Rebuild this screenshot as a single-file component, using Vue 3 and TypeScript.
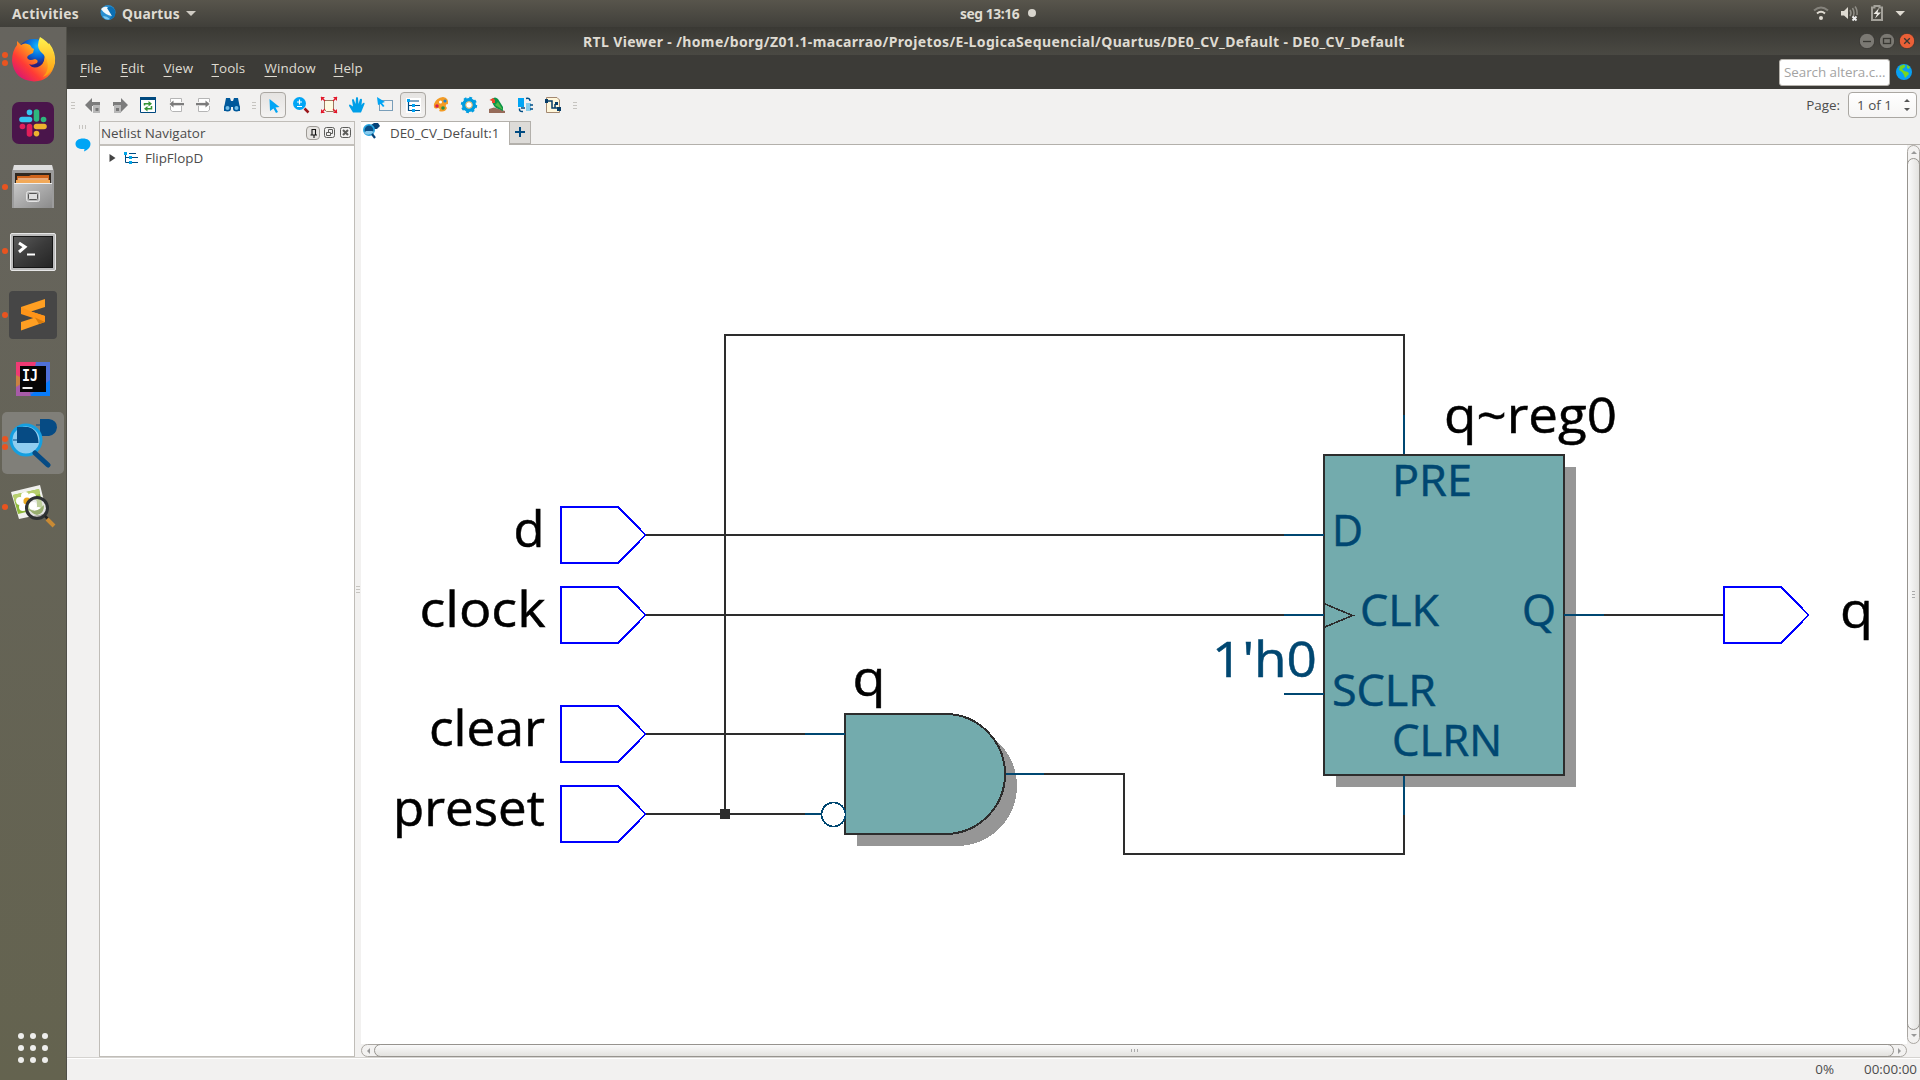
<script setup lang="ts">
interface Port { name: string; y: number; x: number; w: number; tx: number }
interface Label { text: string; x: number; y: number; w: number; size: number; pin: boolean }

const inputs: Port[] = [
  { name: 'd', y: 535, x: 561, w: 31, tx: 513.5 },
  { name: 'clock', y: 615, x: 561, w: 126, tx: 419.5 },
  { name: 'clear', y: 734, x: 561, w: 116, tx: 429 },
  { name: 'preset', y: 814, x: 561, w: 152, tx: 393 },
]

const labels: Label[] = [
  { text: 'q', x: 852.5, y: 696, w: 33, size: 49.5, pin: false },
  { text: 'q~reg0', x: 1444, y: 433, w: 173, size: 49.5, pin: false },
  { text: 'q', x: 1840, y: 628, w: 33, size: 49.5, pin: false },
  { text: "1'h0", x: 1212, y: 677, w: 105, size: 49.5, pin: true },
  { text: 'PRE', x: 1392, y: 496, w: 80, size: 43, pin: true },
  { text: 'D', x: 1332, y: 546, w: 31, size: 43, pin: true },
  { text: 'CLK', x: 1360, y: 626, w: 79, size: 43, pin: true },
  { text: 'Q', x: 1522, y: 626, w: 34, size: 43, pin: true },
  { text: 'SCLR', x: 1332, y: 706, w: 104, size: 43, pin: true },
  { text: 'CLRN', x: 1392, y: 756, w: 110, size: 43, pin: true },
]

const menus = ['File', 'Edit', 'View', 'Tools', 'Window', 'Help']
const gridDots = [0, 1, 2, 3, 4, 5, 6, 7, 8]

function portPath(x: number, y: number): string {
  return `M${x} ${y - 28}H${x + 57}L${x + 84.5} ${y}L${x + 57} ${y + 28}H${x}Z`
}
</script>

<template>
  <div class="desktop">
    <header class="topbar">
      <span class="activities">Activities</span>
      <svg class="app-ico" width="16" height="16" viewBox="0 0 16 16">
        <circle cx="8" cy="7.5" r="7.5" fill="#2a8fd0" />
        <path d="M1 4Q5 0 9 3L12 11Q5 10 1 4Z" fill="#f2f8fc" />
        <path d="M7 3Q11-1 15 5V11Q12 15 9 14L12 11Z" fill="#0b6fb4" />
        <path d="M3 11Q7 11 10 14Q5 16 3 11Z" fill="#7cc8f0" />
      </svg>
      <span class="appname">Quartus</span>
      <i class="caret"></i>
      <span class="clock">seg 13:16</span>
      <i class="bullet"></i>
      <span class="grow"></span>
      <svg class="sys" width="100" height="27" viewBox="0 0 100 27" fill="none">
        <path d="M4 10.5Q11 4.500 18 10.500" stroke="#85837c" stroke-width="2" />
        <path d="M7 13.500Q11 10 15 13.500" stroke="#dfdbd2" stroke-width="2" />
        <circle cx="11" cy="18" r="2" fill="#dfdbd2" />
        <path d="M31 11H34L38 7V19L34 15.500H31Z" fill="#dfdbd2" />
        <path d="M40 10Q42 13 40 16M42.500 8Q45.500 13 42.500 18M45 6.500Q47.500 9.500 47 15" stroke="#8f8d86" stroke-width="1.500" />
        <path d="M42.500 16.500L46.500 20.500M46.500 16.500L42.500 20.500" stroke="#eee" stroke-width="1.800" />
        <path d="M62 7.500H64.500V6H69.500V7.500H72V20H62Z" stroke="#a3a19a" stroke-width="2" />
        <path d="M69 8L63.500 14H67L65 18.500L71 12.500H67.500Z" fill="#eceae4" />
        <path d="M85.500 11H95L90.200 16Z" fill="#dfdbd2" />
      </svg>
    </header>

    <div class="main">
      <aside class="dock">
        <div class="launcher">
          <b class="run two"></b>
          <svg class="fox" width="48" height="48" viewBox="0 0 48 48">
            <defs>
              <linearGradient id="fx" x1="0.9" y1="0.1" x2="0.1" y2="0.9">
                <stop offset="0" stop-color="#fff04a" /><stop offset=".35" stop-color="#ffa01c" />
                <stop offset=".68" stop-color="#ff3b35" /><stop offset="1" stop-color="#d6127a" />
              </linearGradient>
              <radialGradient id="fb" cx=".6" cy=".2"><stop offset="0" stop-color="#12b8ff" /><stop offset=".6" stop-color="#0566d8" /><stop offset="1" stop-color="#29207c" /></radialGradient>
              <linearGradient id="fy" x1="0" y1="0" x2="0" y2="1"><stop offset="0" stop-color="#fff44f" /><stop offset="1" stop-color="#ff980e" /></linearGradient>
            </defs>
            <circle cx="24" cy="22" r="18" fill="url(#fb)" />
            <path d="M7 6L11 10Q15 7 20 10L22 13L24 14L23 18L19 20Q16 22 18 24Q20 26 25 24Q29 25 27 28Q22 31 19 29Q23 35 30 31Q36 27 34 17L39 8Q46 17 45 28Q41 46 24 46.500Q4 45 2 26Q2 16 7 10Z" fill="url(#fx)" />
            <path d="M30 2Q44 10 45 26Q43 38 33 42Q40 35 37 25Q35 20 30 16Q26 11 30 2Z" fill="url(#fy)" />
          </svg>
        </div>
        <div class="launcher">
          <svg width="42" height="42" viewBox="0 0 42 42">
            <rect width="42" height="42" rx="7" fill="#4a154b" />
            <g stroke-width="5.600" stroke-linecap="round">
              <path d="M10 17.500H17.500M17.500 10.500V10.200" stroke="#36c5f0" />
              <path d="M24.500 10V17M31.500 17.500H31.600" stroke="#2eb67d" />
              <path d="M24.500 24.500H32M24.500 31.500V31.600" stroke="#ecb22e" />
              <path d="M17.500 24.500V32M10.500 24.500H10.400" stroke="#e01e5a" />
            </g>
          </svg>
        </div>
        <div class="launcher">
          <b class="run"></b>
          <svg width="42" height="44" viewBox="0 0 42 44">
            <defs><linearGradient id="fg" x1="0" y1="0" x2="1" y2="1"><stop offset="0" stop-color="#c8c8c8" /><stop offset="1" stop-color="#8b8b8b" /></linearGradient></defs>
            <path d="M2 0H40L42 6V43H0V6Z" fill="#9c9c9c" /><path d="M2 0H40L41 5H1Z" fill="#dedede" />
            <rect x="3" y="8" width="36" height="12" fill="#302820" />
            <path d="M5 11H17L19 10H37V18H5Z" fill="#d0641c" /><path d="M4 15H38V18H4Z" fill="#f2a958" /><path d="M6 13.500H36V14.500H6Z" fill="#fff0d8" />
            <path d="M2 18H40V43H2Z" fill="url(#fg)" /><path d="M2 18H40V19H2Z" fill="#eee" />
            <rect x="14.500" y="26.500" width="13" height="10" rx="2" fill="#b8b8b8" stroke="#e4e4e4" />
            <rect x="16.500" y="28.500" width="9" height="6" rx="1" fill="#dedede" stroke="#555" />
          </svg>
        </div>
        <div class="launcher">
          <b class="run"></b>
          <svg class="term" width="46" height="38" viewBox="0 0 46 38">
            <defs><linearGradient id="tg" x1="0" y1="0" x2="1" y2="1"><stop offset="0" stop-color="#5a5a5a" /><stop offset=".5" stop-color="#3b3b3b" /><stop offset="1" stop-color="#242424" /></linearGradient></defs>
            <rect x=".5" y=".5" width="45" height="37" rx="1.500" fill="#bbb" stroke="#e6e6e6" />
            <rect x="3.500" y="3.500" width="39" height="31" fill="url(#tg)" stroke="#161616" />
            <path d="M9 10L15 14L9 19" stroke="#fff" stroke-width="3" fill="none" /><path d="M17 21.500H25" stroke="#fff" stroke-width="2" />
          </svg>
        </div>
        <div class="launcher">
          <b class="run"></b>
          <svg width="48" height="48" viewBox="0 0 48 48">
            <rect width="48" height="48" rx="4" fill="#464646" />
            <path d="M12 16L36 8V16L22 20.500L36 25V31L12 39.500V31L26 26.500L12 22Z" fill="#ff9f22" />
            <path d="M22 20.500L36 25V31L12 23V16Z" fill="#ff9418" />
            <path d="M26 26.500L36 31L30 33Z" fill="#d87b0c" />
          </svg>
        </div>
        <div class="launcher">
          <svg width="34" height="34" viewBox="0 0 34 34">
            <rect width="34" height="34" fill="#ef3a74" /><path d="M20 0H34V34H13Z" fill="#4f70d8" /><path d="M13 34L34 18V34Z" fill="#087cfa" />
            <path d="M0 13L6 16V34H0Z" fill="#c98242" /><path d="M0 25L8 20L15 34H0Z" fill="#a75ba8" />
            <rect x="4" y="4" width="26" height="26" fill="#050505" />
            <text x="6" y="19" textLength="16" lengthAdjust="spacingAndGlyphs" class="ij">IJ</text>
            <rect x="6.500" y="25" width="10" height="2" fill="#eee" />
          </svg>
        </div>
        <div class="launcher active">
          <b class="run two"></b>
          <svg width="48" height="50" viewBox="0 0 48 50">
            <path d="M27 6.500H31V1H40Q48 2 48 9.500Q47 17 40 18H31V7.500H27Z" fill="#064b84" />
            <circle cx="17" cy="22" r="15" fill="#90cdf0" stroke="#159fe0" stroke-width="3" />
            <path d="M4 21.500H8V9H19Q29 11 29.500 25H8V22.500H4Z" fill="#064b84" />
            <path d="M26 35L39 47" stroke="#064b84" stroke-width="5" stroke-linecap="round" />
          </svg>
        </div>
        <div class="launcher">
          <b class="run"></b>
          <svg width="48" height="48" viewBox="0 0 48 48">
            <path d="M2 9L31 2L38 30L10 36Z" fill="#f1f1ee" /><path d="M4 12L30 6L34 25L9 31Z" fill="#8fb83b" /><path d="M4 12L30 6L31 11L6 19Z" fill="#b7cf6d" />
            <g fill="#fff"><circle cx="16" cy="13" r="4" /><circle cx="23" cy="14" r="4" /><circle cx="11" cy="18" r="4" /><circle cx="14" cy="24" r="4" /><circle cx="24" cy="20" r="4" /></g><circle cx="18" cy="18" r="3.500" fill="#eaa61d" />
            <circle cx="28" cy="25" r="10.500" fill="#ddd" fill-opacity=".6" stroke="#2e3133" stroke-width="3" />
            <circle cx="24" cy="23" r="4" fill="#fff" /><circle cx="29" cy="28" r="4" fill="#fff" />
            <path d="M20 26Q27 31 35 22Q35 31 28 32Q23 31 20 26Z" fill="#98ae70" />
            <path d="M36 33L39 36" stroke="#222" stroke-width="2.500" /><path d="M38 36L45 43" stroke="#c98a34" stroke-width="4" />
          </svg>
        </div>
        <div class="apps"><i v-for="n in gridDots" :key="n"></i></div>
      </aside>

      <section class="window">
        <div class="titlebar">
          <span class="title">RTL Viewer - /home/borg/Z01.1-macarrao/Projetos/E-LogicaSequencial/Quartus/DE0_CV_Default - DE0_CV_Default</span>
          <div class="winbtns">
            <svg v-for="k in 3" :key="k" width="16" height="16" viewBox="0 0 16 16" :class="{ close: k === 3 }">
              <circle class="disc" cx="8" cy="8" r="7.700" />
              <path v-if="k === 1" d="M4 8.500H12" />
              <rect v-else-if="k === 2" x="4.500" y="5.500" width="7" height="5" />
              <path v-else d="M5.200 5.200L10.800 10.800M10.800 5.200L5.200 10.800" />
            </svg>
          </div>
        </div>

        <nav class="menubar">
          <span v-for="m in menus" :key="m" :class="'m-' + m.toLowerCase()"><u>{{ m[0] }}</u>{{ m.slice(1) }}</span>
          <div class="search">Search altera.c...</div>
          <svg class="globe" width="16" height="16" viewBox="0 0 16 16">
            <circle cx="8" cy="8" r="8" fill="#08a0f4" />
            <path d="M4 2L8 0.500L9.500 2L8 4L6 5L8 7L12 8L13 10L9 14L8 11L6 8L3 6Z" fill="#78d51e" /><path d="M11 1L14 3L13 5L11 4Z" fill="#78d51e" />
          </svg>
        </nav>

        <div class="toolbar">
          <div class="grip g1"><i></i><i></i><i></i></div>
          <div class="tool"><svg class="nudge" viewBox="0 0 24 24"><path d="M4 12L11 5V9H19V13H11V19Z" fill="#7c7c7c" /><rect x="12" y="12" width="7" height="8" fill="#b8b8b8" /><rect x="14.500" y="15" width="3" height="3" fill="#777" /></svg></div>
          <div class="tool"><svg viewBox="0 0 24 24"><path d="M20 12L13 5V9H5V13H13V19Z" fill="#7c7c7c" /><rect x="6" y="12" width="7" height="8" fill="#b8b8b8" /><rect x="8" y="15" width="3" height="3" fill="#777" /></svg></div>
          <div class="tool"><svg viewBox="0 0 24 24"><path d="M4.500 4.500H19.500V19.500H4.500Z" fill="#fff" stroke="#00497f" /><path d="M4 4H20V7H4Z" fill="#00497f" /><path d="M8.500 12.500V10.700H13M15.500 13V15.800H11" fill="none" stroke="#359536" stroke-width="1.500" /><path d="M12.500 8L16 10.700L12.500 13.400ZM11.500 13L8 15.800L11.500 18.500Z" fill="#359536" /></svg></div>
          <div class="tool"><svg viewBox="0 0 24 24"><path d="M6.500 9V5.500H17.500V9M6.500 13V17L8.500 18.500H17.500V13" fill="#fff" stroke="#b5b5b5" /><path d="M5.500 11L9.500 7.500V10H20V12.200H9.500V14.500Z" fill="#7c7c7c" /></svg></div>
          <div class="tool"><svg viewBox="0 0 24 24"><path d="M6.500 9V5.500H17.500V9M6.500 13V18.500H15.500L17.500 17V13" fill="#fff" stroke="#b5b5b5" /><path d="M17.500 11L13.500 7.500V10H4V12.200H13.500V14.500Z" fill="#7c7c7c" /></svg></div>
          <div class="tool"><svg viewBox="0 0 24 24"><path d="M6 5H10L11 8H13L14 5H18L20 15V18H14L13 14H11L10 18H4V15Z" fill="#00599b" /><circle cx="7.500" cy="15" r="3.500" fill="#00599b" /><circle cx="16.500" cy="15" r="3.500" fill="#00599b" /><circle cx="7.500" cy="15" r="2" fill="#75bfe8" /><circle cx="16.500" cy="15" r="2" fill="#75bfe8" /></svg></div>
          <div class="grip g2"><i></i><i></i><i></i></div>
          <div class="tool on"><svg viewBox="0 0 24 24"><path d="M8.500 6L18.500 14L14.500 14.500L17 19L15 20L12.500 15.500L9 18Z" fill="#00a5f5" /></svg></div>
          <div class="tool"><svg viewBox="0 0 24 24"><circle cx="10.500" cy="10.500" r="6.500" fill="#00a5f5" /><path d="M15.500 15.500L19.500 19.500" stroke="#9b171b" stroke-width="2.500" /><path d="M8 9H13M10.500 6.500V11.500M8 13.500H13" stroke="#fff" stroke-width="1.200" /></svg></div>
          <div class="tool"><svg viewBox="0 0 24 24"><path d="M7.500 7.500H16.500V18.500H9.500L7.500 16.500Z" fill="#fffbe2" stroke="#9a7a63" /><path d="M4 4L8 8M20 4L16 8M4 20L8 16M20 20L16 16" stroke="#e2182b" stroke-width="1.200" fill="none" /><path d="M4 4H8L4 8ZM20 4V8L16 4ZM4 20V16L8 20ZM20 20H16L20 16Z" fill="#e2182b" /></svg></div>
          <div class="tool"><svg viewBox="0 0 24 24"><path d="M8 19.500L5 14.500Q3 11.500 5 11.500L8 13.500L7 7Q8 5 9 7L10.500 11L11 5Q12 3 13 5L13.500 11L15 6Q17 5 17 7L16.500 12L18 10Q20 9 19.500 11L16 19.500Z" fill="#009fe8" /></svg></div>
          <div class="tool"><svg viewBox="0 0 24 24"><rect x="6.500" y="7.500" width="13" height="10" fill="none" stroke="#004b82" stroke-dasharray="1 1" /><path d="M4 4L12 9L9 10L11.500 13L10 14L7.500 11L5 12Z" fill="#00a5f5" /></svg></div>
          <div class="tool on"><svg viewBox="0 0 24 24"><rect x="5" y="5" width="15" height="15" fill="#fff" /><path d="M7.500 7V17.500H19M7.500 12.500H19M7.500 8H18" stroke="#004b82" fill="none" stroke-width="1.200" /><path d="M6 6H9V9H6ZM11 11H14V14H11ZM11 16H14V19H11Z" fill="#00a5f5" /></svg></div>
          <div class="tool"><svg viewBox="0 0 24 24"><path d="M5 11Q7 5 14 4Q20 5 19 11L17 11.500Q16 13 18 15Q16 20 10 18Q12 16 9 15Q4 17 5 11Z" fill="#f49b24" /><circle cx="8" cy="13" r="1.800" fill="#d8204f" /><circle cx="11.500" cy="9" r="1.500" fill="#fff" /><circle cx="16" cy="8" r="1.600" fill="#1b83d3" /><circle cx="14" cy="15" r="1.800" fill="#2b9146" /></svg></div>
          <div class="tool"><svg viewBox="0 0 24 24"><circle cx="12" cy="12" r="5.200" fill="#fff" stroke="#009de0" stroke-width="3.600" /><circle cx="12" cy="12" r="7.200" fill="none" stroke="#009de0" stroke-width="2" stroke-dasharray="2.830 2.830" /><circle cx="12" cy="12" r="3.300" fill="none" stroke="#d6ac5d" /></svg></div>
          <div class="tool"><svg viewBox="0 0 24 24"><path d="M4 16L9 14.500L20 18V20H4Z" fill="#966b59" /><path d="M7 6Q10 3 13 6L18 14L18 18L11 15Q7 12 7 6Z" fill="#0b9448" /><path d="M4.500 7L8 5L10 7V10H7V8Z" fill="#ed482e" /><path d="M13 9L18 17L10 12Z" fill="#54b947" /></svg></div>
          <div class="tool"><svg viewBox="0 0 24 24"><rect x="5" y="5" width="6" height="9" fill="#00a5f5" /><rect x="13" y="10" width="5" height="8" fill="#86cceb" /><path d="M13 5.500Q17 4.500 17 8M10 18.500Q6 19 6.500 15.500M12 15H8M17 12H20M17 16H20" stroke="#004b82" fill="none" stroke-width="1.500" /></svg></div>
          <div class="tool"><svg viewBox="0 0 24 24"><path d="M5.500 4.500H16L18.500 7V19.500H5.500Z" fill="#fff6da" stroke="#a38870" /><path d="M5 8H11V15H19M14 11V15" stroke="#073d67" stroke-width="1.500" fill="none" /><path d="M14 9H17V12H14ZM16 14H20V18H16ZM4 6H7V10H4Z" fill="#073d67" /></svg></div>
          <div class="grip g3"><i></i><i></i><i></i></div>
          <span class="grow"></span>
          <span class="pagelabel">Page:</span>
          <div class="spin"><span>1 of 1</span><svg width="8" height="14" viewBox="0 0 8 14"><path d="M1 4L4 1L7 4ZM1 10L4 13L7 10Z" fill="#555" /></svg></div>
        </div>

        <div class="work">
          <div class="strip">
            <div class="vgrip"><i></i><i></i><i></i></div>
            <svg width="16" height="14" viewBox="0 0 16 14"><path d="M8 .5C12.500 .5 15.500 2.600 15.500 6Q15.500 11 9 13.500L9.500 11C4 11.500 .5 9.500 .5 6C.5 2.600 3.500 .5 8 .5Z" fill="#00a5f5" /></svg>
          </div>
          <div class="panel">
            <div class="panelhead">
              <span>Netlist Navigator</span>
              <svg width="46" height="14" viewBox="0 0 46 14" fill="none" stroke="#5c5c5a">
                <rect x=".5" y=".5" width="13" height="13" rx="3.500" fill="#e6e4e1" stroke="#9d9a95" /><path d="M6 9V3.500H9.500V9M4.500 9H11M8 9V12" stroke="#111" stroke-width="1.100" />
                <rect x="18.500" y="1.500" width="10" height="10" rx="2" /><path d="M22.500 6V3.500H26.500V7.500H24.500M20.500 6.500H24.500V9.500H20.500Z" />
                <rect x="34.500" y="1.500" width="10" height="10" rx="2" /><path d="M37 4L42 9M42 4L37 9" stroke-width="2" />
              </svg>
            </div>
            <div class="tree">
              <svg width="7" height="8" viewBox="0 0 7 8"><path d="M.5 0L6.500 4L.5 8Z" fill="#444" /></svg>
              <svg class="treeico" width="14" height="12" viewBox="0 0 14 12"><path d="M1.500 1V10.500H14M1.500 5.500H14M5 1.500H12" stroke="#004b82" fill="none" /><path d="M0 0H3V3H0ZM5 4H8V7H5ZM5 9H8V12H5Z" fill="#00a5e8" /></svg>
              <span>FlipFlopD</span>
            </div>
          </div>
          <div class="splitter"><i></i><i></i><i></i></div>
          <div class="viewer">
            <div class="tabs">
              <div class="tab">
                <svg width="18" height="17" viewBox="0 0 18 17"><path d="M8 2L11 0H15L17 3L14 6H9Z" fill="#064378" /><circle cx="6" cy="7" r="5.200" fill="#0b4f86" stroke="#29a7e1" stroke-width="1.600" /><path d="M1 10Q6 14 11 9L9 8H3Z" fill="#86caee" /><path d="M9 11L12 15" stroke="#064378" stroke-width="2.200" /></svg>
                <span>DE0_CV_Default:1</span>
              </div>
              <div class="plus"><svg width="10" height="10" viewBox="0 0 10 10"><path d="M5 0V10M0 5H10" stroke="#004b82" stroke-width="2" /></svg></div>
            </div>
            <div class="scrollarea">
              <div class="canvascol">
                <svg class="schematic" viewBox="361 145 1546 899">
                  <g shape-rendering="crispEdges" fill="none" stroke-width="2">
                    <rect x="1336" y="467" width="240" height="320" fill="#969696" />
                    <path d="M857 726H957A60 60 0 0 1 957 846H857Z" fill="#969696" />
                    <g stroke="#2d2d2d">
                      <path d="M646 535H1284M646 615H1284M646 734H805M646 814H805M725 814V335H1404V415M1044 774H1124V854H1404V815M1604 615H1724" />
                      <rect x="1324" y="455" width="240" height="320" fill="#73abad" />
                      <path d="M845 714H945A60 60 0 0 1 945 834H845Z" fill="#73abad" />
                      <path d="M1325 604L1352.500 615.500L1325 627" stroke-width="1.600" />
                    </g>
                    <rect x="720" y="809" width="10" height="10" fill="#2d2d2d" />
                    <g stroke="#004771">
                      <path d="M1284 535H1324M1284 615H1324M1284 694H1324M1404 415V454M1404 776V815M1564 615H1604M805 734H845M805 814H821M1006 774H1044" />
                      <circle cx="833.500" cy="814.500" r="12" stroke-width="1.700" fill="#fff" />
                    </g>
                    <g stroke="#0000ff">
                      <path v-for="p in inputs" :key="p.name" :d="portPath(p.x, p.y)" />
                      <path :d="portPath(1724, 615)" />
                    </g>
                  </g>
                  <text v-for="p in inputs" :key="p.name" :x="p.tx" :y="p.y + 12" :textLength="p.w" font-size="49.5" lengthAdjust="spacingAndGlyphs">{{ p.name }}</text>
                  <text v-for="(l, i) in labels" :key="i" :x="l.x" :y="l.y" :textLength="l.w" :font-size="l.size" :class="{ pin: l.pin }" lengthAdjust="spacingAndGlyphs">{{ l.text }}</text>
                </svg>
                <div class="hscroll">
                  <svg width="12" height="10" viewBox="0 0 12 10"><path d="M8 2V8L5 5Z" fill="#999" /></svg>
                  <div class="hthumb"><i></i><i></i><i></i></div>
                  <svg width="12" height="10" viewBox="0 0 12 10"><path d="M4 2V8L7 5Z" fill="#999" /></svg>
                </div>
              </div>
              <div class="vcol">
                <div class="vscroll">
                  <svg width="10" height="12" viewBox="0 0 10 12"><path d="M2 8H8L5 5Z" fill="#999" /></svg>
                  <div class="vthumb"><i></i><i></i><i></i></div>
                  <svg width="10" height="13" viewBox="0 0 10 13"><path d="M2 4H8L5 7Z" fill="#999" /></svg>
                </div>
              </div>
            </div>
          </div>
        </div>
        <footer class="status"><span class="pct">0%</span><span class="time">00:00:00</span></footer>
      </section>
    </div>
  </div>
</template>

<style>
html, body { margin: 0; overflow: hidden; }
</style>

<style scoped>
* { box-sizing: border-box; }
.desktop { width: 1920px; height: 1080px; display: flex; flex-direction: column; font-family: "Open Sans", "Noto Sans", sans-serif; font-size: 13.4px; color: #4c4c4c; background: #f2f1f0; white-space: nowrap; overflow: hidden; }
.grow { flex: 1; }
.topbar { height: 27px; flex: none; display: flex; align-items: center; background: linear-gradient(#58554c, #403f3a); color: #dfdbd2; font-weight: 700; font-family: "Noto Sans", sans-serif; font-size: 13.8px; }
.topbar > span { padding-bottom: 1px; }
.activities { width: 68px; margin-left: 12px; letter-spacing: .3px; }
.app-ico { margin-left: 20px; margin-top: -2px; }
.appname { margin-left: 6px; width: 60px; letter-spacing: .25px; }
.caret { margin-left: 4px; border: 5px solid transparent; border-top-color: #cfcbc3; border-bottom: 0; }
.clock { margin-left: 764px; width: 62px; letter-spacing: -.4px; }
.bullet { width: 8px; height: 8px; border-radius: 50%; background: #d8d5cd; margin: 0 0 1px 6px; }
.sys { margin-right: 10px; }
.main { flex: 1; display: flex; min-height: 0; }
.dock { width: 67px; flex: none; display: flex; flex-direction: column; background: linear-gradient(#66645e, #64634f); border-right: 1px solid #504f48; }
.launcher { height: 64px; flex: none; display: flex; align-items: center; justify-content: center; position: relative; }
.launcher.active { height: 62px; width: 62px; margin: 1px 2px; background: #807f79; border-radius: 5px; }
.fox { margin-left: 2px; }
.term { margin-top: 2px; }
.run { position: absolute; left: 2px; top: 29px; width: 6px; height: 6px; border-radius: 50%; background: #e95420; }
.run.two { top: 25px; box-shadow: 0 8px #e95420; }
.active .run { left: 0; top: 24px; }
.ij { font: 700 15px "DejaVu Sans Mono", monospace; fill: #fff; }
.apps { margin-top: auto; margin-bottom: 17px; margin-left: 18px; display: grid; grid-template-columns: repeat(3, 6px); gap: 6px; }
.apps i { height: 6px; border-radius: 50%; background: #eeeeec; }
.window { flex: 1; display: flex; flex-direction: column; min-width: 0; }
.titlebar { height: 28px; flex: none; display: flex; align-items: center; background: linear-gradient(#3a3934, #4a4943); color: #dfdbd2; font: 700 14px "Noto Sans", sans-serif; }
.title { margin-left: 516px; width: 830px; letter-spacing: .36px; }
.winbtns { display: flex; gap: 4px; margin-left: auto; margin-right: 5px; }
.winbtns svg { fill: none; stroke: #393833; stroke-width: 1.300; }
.winbtns .disc { fill: #7b7973; stroke: #33322e; stroke-width: .8; }
.winbtns .close .disc { fill: #ec6037; }
.menubar { height: 34px; flex: none; background: #3c3b37; color: #dfdbd2; display: flex; align-items: center; padding-left: 13px; }
.menubar > span { margin-top: -8px; letter-spacing: .1px; }
.menubar u { text-underline-offset: 3px; text-decoration-thickness: 1px; }
.m-file { width: 40.5px; }
.m-edit { width: 43px; }
.m-view { width: 48px; }
.m-tools { width: 53px; }
.m-window { width: 69px; }
.search { margin-left: auto; width: 111px; height: 27px; margin-top: 1px; border: 1px solid #b5b2ac; border-radius: 3px; background: #fff; color: #a3a3a3; padding-left: 4px; line-height: 24px; letter-spacing: -.05px; }
.globe { margin: 0 8px 0 6px; }
.toolbar { height: 32px; flex: none; display: flex; padding-right: 3px; }
.tool { width: 28px; height: 32px; display: flex; align-items: center; justify-content: center; }
.tool svg { width: 24px; height: 24px; }
.tool .nudge { margin-left: 1px; }
.tool.on { width: 26px; height: 26px; margin: 3px 1px; border: 1px solid #aaa7a2; border-radius: 4px; background: linear-gradient(#e5e3e1, #f4f3f2); }
.tool.on svg { flex: none; }
.grip { display: flex; flex-direction: column; gap: 2px; justify-content: center; }
.grip i, .splitter i { display: block; width: 4px; height: 1px; background: #c6c4c0; }
.g1 { width: 11px; padding-left: 4px; }
.g2 { width: 13px; padding-left: 6px; }
.g3 { width: 14px; padding-left: 6px; }
.pagelabel { line-height: 32px; margin-right: 8px; }
.spin { width: 69px; height: 26px; margin-top: 3px; border: 1px solid #aaa7a2; border-radius: 4px; background: linear-gradient(#fff, #f6f5f4); display: flex; align-items: center; justify-content: space-between; padding: 0 5px 0 8px; }
.work { height: 937px; flex: none; display: flex; }
.strip { width: 32px; flex: none; padding: 4px 0 0 8px; }
.vgrip { display: flex; gap: 2px; margin: 0 0 9px 4px; }
.vgrip i { width: 1px; height: 4px; background: #c6c4c0; }
.strip svg { display: block; }
.panel { width: 256px; flex: none; border: 1px solid #c0bdb8; background: #fff; height: 936px; }
.panelhead { height: 24px; border-bottom: 2px solid #c3c0bb; background: #f2f1f0; display: flex; align-items: center; justify-content: space-between; padding: 0 2px 0 1px; }
.tree { display: flex; align-items: center; height: 23px; padding-left: 9px; }
.treeico { margin-left: 8px; margin-right: 7px; }
.splitter { width: 6px; flex: none; display: flex; flex-direction: column; gap: 2px; justify-content: center; padding-left: 1px; }
.viewer { flex: 1; display: flex; flex-direction: column; min-width: 0; }
.tabs { height: 24px; flex: none; display: flex; border-bottom: 1px solid #b3b0ab; }
.tab { width: 149px; border: 1px solid #b3b0ab; border-bottom: 0; border-left: 0; height: 24px; background: #fff; display: flex; align-items: center; padding: 0 0 2px 2px; }
.tab svg { margin-top: -2px; }
.tab span { margin-left: 9px; letter-spacing: -.02px; }
.plus { width: 21px; height: 23px; border: 1px solid #b3b0ab; border-left: 0; background: #dddbd8; display: flex; align-items: center; justify-content: center; padding-bottom: 2px; }
.scrollarea { flex: 1; display: flex; min-height: 0; }
.canvascol { width: 1546px; display: flex; flex-direction: column; }
.schematic { width: 1546px; height: 899px; background: #fff; flex: none; display: block; }
.schematic text { fill: #000; font-family: "Open Sans", sans-serif; stroke: #000; stroke-width: .5px; }
.schematic text.pin { fill: #004771; stroke: #004771; }
.hscroll { height: 13px; border: 1px solid #aaa7a2; border-radius: 7px; display: flex; align-items: center; background: #f3f2f1; }
.hthumb { flex: 1; height: 13px; margin: 0; border: 1px solid #96938e; border-radius: 7px; background: linear-gradient(#fafafa, #e3e2df); display: flex; gap: 2px; align-items: center; justify-content: center; }
.hthumb i { width: 1px; height: 3px; background: #aaa; }
.vcol { width: 13px; }
.vscroll { height: 899px; border: 1px solid #aaa7a2; border-radius: 7px; display: flex; flex-direction: column; align-items: center; background: #f3f2f1; }
.vthumb { width: 13px; flex: 1; border: 1px solid #96938e; border-radius: 7px; background: linear-gradient(90deg, #fafafa, #e3e2df); display: flex; flex-direction: column; gap: 2px; align-items: center; justify-content: center; }
.vthumb i { width: 3px; height: 1px; background: #aaa; }
.status { height: 22px; flex: none; border-top: 1px solid #fff; display: flex; align-items: center; justify-content: flex-end; padding: 0 3px 2px 0; box-shadow: 0 -1px #d5d3d0; }
.pct { margin-right: 30px; }
</style>
